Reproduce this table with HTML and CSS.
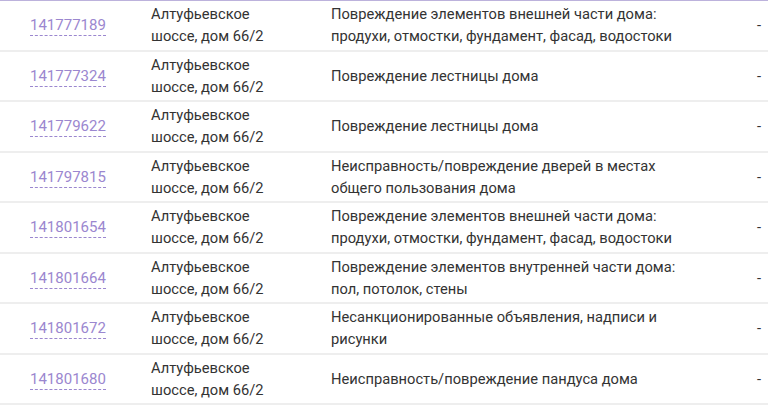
FILE: index.html
```html
<!DOCTYPE html>
<html lang="ru">
  <head>
    <meta charset="UTF-8" />
    <title>Обращения</title>
    <link rel="stylesheet" href="styles.css">
  </head>
  <body>
    <table class="claims">
      <tbody>
        <tr>
          <td class="id"><a href="#">141777189</a></td>
          <td class="addr">Алтуфьевское<br>шоссе, дом 66/2</td>
          <td class="desc">Повреждение элементов внешней части дома:<br>продухи, отмостки, фундамент, фасад, водостоки</td>
          <td class="res">-</td>
        </tr>
        <tr>
          <td class="id"><a href="#">141777324</a></td>
          <td class="addr">Алтуфьевское<br>шоссе, дом 66/2</td>
          <td class="desc">Повреждение лестницы дома</td>
          <td class="res">-</td>
        </tr>
        <tr>
          <td class="id"><a href="#">141779622</a></td>
          <td class="addr">Алтуфьевское<br>шоссе, дом 66/2</td>
          <td class="desc">Повреждение лестницы дома</td>
          <td class="res">-</td>
        </tr>
        <tr>
          <td class="id"><a href="#">141797815</a></td>
          <td class="addr">Алтуфьевское<br>шоссе, дом 66/2</td>
          <td class="desc">Неисправность/повреждение дверей в местах<br>общего пользования дома</td>
          <td class="res">-</td>
        </tr>
        <tr>
          <td class="id"><a href="#">141801654</a></td>
          <td class="addr">Алтуфьевское<br>шоссе, дом 66/2</td>
          <td class="desc">Повреждение элементов внешней части дома:<br>продухи, отмостки, фундамент, фасад, водостоки</td>
          <td class="res">-</td>
        </tr>
        <tr>
          <td class="id"><a href="#">141801664</a></td>
          <td class="addr">Алтуфьевское<br>шоссе, дом 66/2</td>
          <td class="desc">Повреждение элементов внутренней части дома:<br>пол, потолок, стены</td>
          <td class="res">-</td>
        </tr>
        <tr>
          <td class="id"><a href="#">141801672</a></td>
          <td class="addr">Алтуфьевское<br>шоссе, дом 66/2</td>
          <td class="desc">Несанкционированные объявления, надписи и<br>рисунки</td>
          <td class="res">-</td>
        </tr>
        <tr>
          <td class="id"><a href="#">141801680</a></td>
          <td class="addr">Алтуфьевское<br>шоссе, дом 66/2</td>
          <td class="desc">Неисправность/повреждение пандуса дома</td>
          <td class="res">-</td>
        </tr>
      </tbody>
    </table>
  </body>
</html>
```
FILE: styles.css
```css
body {
  margin: 0;
  background-color: #fff;
  color: #333;
  font-family: Roboto, "Noto Sans", sans-serif;
  font-size: 14.7px;
}

.claims {
  width: 768px;
  border-collapse: collapse;
  border-top: 1px solid #bcb2dc;
}

.claims td {
  padding: 2.25px 0;
  line-height: 22px;
  vertical-align: middle;
  border-bottom: 2px solid #eeeeee;
  white-space: nowrap;
}

.claims .id {
  width: 151px;
  padding-left: 30px;
  box-sizing: border-box;
}

.claims .id a {
  color: #9b87cf;
  font-size: 15px;
  text-decoration: none;
  border-bottom: 1px dashed #9b87cf;
  padding-bottom: 1px;
}

.claims .addr {
  width: 180px;
}

.claims .res {
  width: 20px;
  padding-right: 7px;
  text-align: right;
}
```
